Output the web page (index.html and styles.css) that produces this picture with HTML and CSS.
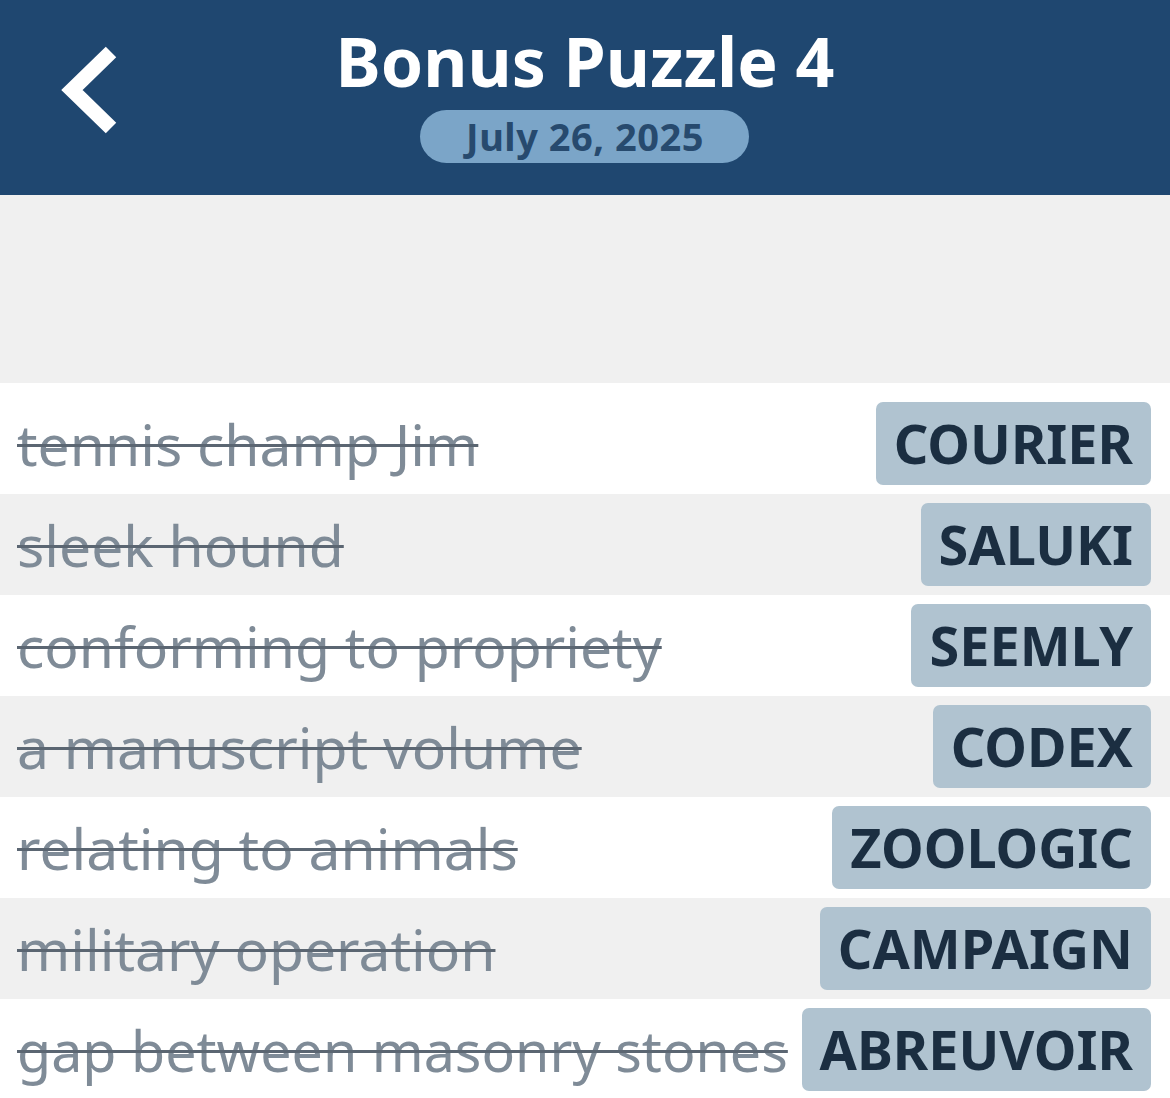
FILE: index.html
```html
<!DOCTYPE html>
<html>
<head>
<meta charset="utf-8">
<link rel="stylesheet" href="styles.css">
</head>
<body>
<header class="topbar">
  <div class="back">
    <svg width="130" height="150" viewBox="0 0 130 150"><path d="M111 52 L72 90 L111 128" fill="none" stroke="#fff" stroke-width="15" stroke-linecap="butt" stroke-linejoin="miter"/></svg>
  </div>
  <div class="titles">
    <h1 class="title">Bonus Puzzle 4</h1>
    <div class="date">July 26, 2025</div>
  </div>
</header>
<div class="spacer"></div>
<ul class="list">
  <li class="row first"><span class="clue">tennis champ Jim</span><span class="ans">COURIER</span></li>
  <li class="row alt"><span class="clue">sleek hound</span><span class="ans">SALUKI</span></li>
  <li class="row"><span class="clue">conforming to propriety</span><span class="ans">SEEMLY</span></li>
  <li class="row alt"><span class="clue">a manuscript volume</span><span class="ans">CODEX</span></li>
  <li class="row"><span class="clue">relating to animals</span><span class="ans">ZOOLOGIC</span></li>
  <li class="row alt"><span class="clue">military operation</span><span class="ans">CAMPAIGN</span></li>
  <li class="row"><span class="clue squeeze">gap between masonry stones</span><span class="ans">ABREUVOIR</span></li>
</ul>
</body>
</html>
```
FILE: styles.css
```css
* { box-sizing: border-box; }
html, body { margin: 0; padding: 0; }
body {
  background: #f0f0f0;
  font-family: "Noto Sans", "Open Sans", sans-serif;
  width: 1170px;
  height: 1098px;
  overflow: hidden;
}
.topbar {
  height: 195px;
  background: #1f4770;
  display: flex;
  position: relative;
  justify-content: center;
}
.back {
  position: absolute;
  left: 0;
  top: 0;
  line-height: 0;
}
.titles {
  display: flex;
  flex-direction: column;
  align-items: center;
  padding-top: 18px;
}
.title {
  margin: 0;
  color: #fff;
  font-size: 68px;
  font-weight: 700;
  line-height: 86px;
}
.date {
  margin-top: 6px;
  background: #7ba5c8;
  color: #274a6e;
  font-weight: 700;
  font-size: 38px;
  letter-spacing: 0.5px;
  line-height: 53px;
  width: 329px;
  text-align: center;
  border-radius: 27px;
}
.spacer { height: 188px; }
.list { list-style: none; margin: 0; padding: 0; }
.row {
  height: 101px;
  background: #fff;
  display: flex;
  align-items: center;
  justify-content: space-between;
  padding: 0 19px 0 17px;
}
.row.first { height: 111px; padding-top: 10px; }
.row.alt { background: #f0f0f0; }
.clue {
  color: #7f8b97;
  font-size: 57px;
  text-decoration: line-through;
  text-decoration-color: #5b6672;
  text-decoration-thickness: 3px;
  white-space: nowrap;
}
.squeeze {
  display: inline-block;
  width: 773px;
  flex: none;
  transform: scaleX(0.975);
  transform-origin: left center;
}
.ans {
  background: #b0c3d0;
  color: #1b2e41;
  font-weight: 700;
  font-size: 54px;
  line-height: 83px;
  padding: 0 18px;
  border-radius: 7px;
  flex: none;
}
```
